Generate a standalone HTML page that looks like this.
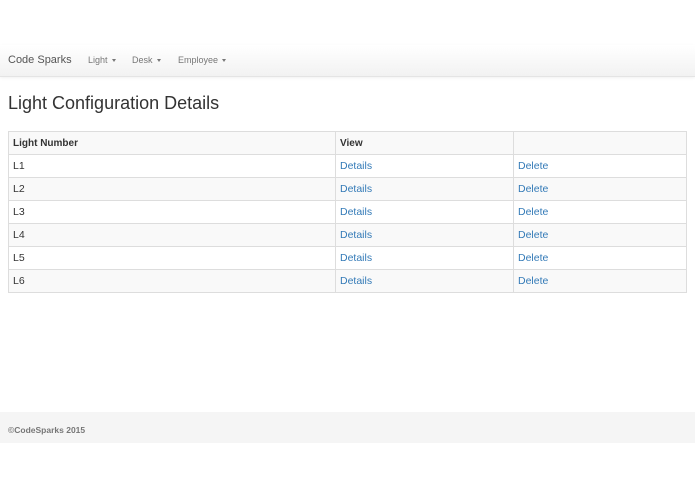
<!DOCTYPE html><html><head><style>
body{margin:0;font-family:"Liberation Sans",sans-serif;background:#fff;width:695px;height:494px;position:relative;overflow:hidden}
.nav{position:absolute;top:45px;left:0;width:695px;height:31px;background:linear-gradient(#fff,#f2f2f2);border-bottom:1px solid #e4e4e4;box-shadow:0 1px 3px rgba(0,0,0,.06)}
.nav span{position:absolute;top:10px;font-size:9px;color:#777}
.nav .b{top:9px;font-size:11px;color:#555;left:8px}
.car{display:inline-block;border-top:3px solid #777;border-left:2.5px solid transparent;border-right:2.5px solid transparent;vertical-align:middle;margin-left:4px}
h1{position:absolute;top:93px;left:8px;margin:0;font-weight:normal;font-size:18px;color:#333}
table{position:absolute;top:131px;left:8px;width:679px;border-collapse:collapse;table-layout:fixed;font-size:10.5px;color:#333}
td{border:1px solid #ddd;height:23px;padding:0 0 0 4px;box-sizing:border-box}
tr:nth-child(odd) td{background:#f9f9f9}
tr.h td{font-weight:bold;background:#f9f9f9;font-size:10px}
a{color:#337ab7}
.f{position:absolute;top:412px;left:0;width:695px;height:31px;background:#f5f5f5}
.f span{position:absolute;left:8px;top:13px;font-size:8.5px;font-weight:bold;color:#777}
</style></head><body>
<div class="nav"><span class="b">Code Sparks</span><span style="left:88px">Light<i class="car"></i></span><span style="left:132px">Desk<i class="car"></i></span><span style="left:178px">Employee<i class="car"></i></span></div>
<h1>Light Configuration Details</h1>
<table>
<colgroup><col style="width:327px"><col style="width:178px"><col></colgroup>
<tr class="h"><td>Light Number</td><td>View</td><td></td></tr>
<tr><td>L1</td><td><a>Details</a></td><td><a>Delete</a></td></tr>
<tr><td>L2</td><td><a>Details</a></td><td><a>Delete</a></td></tr>
<tr><td>L3</td><td><a>Details</a></td><td><a>Delete</a></td></tr>
<tr><td>L4</td><td><a>Details</a></td><td><a>Delete</a></td></tr>
<tr><td>L5</td><td><a>Details</a></td><td><a>Delete</a></td></tr>
<tr><td>L6</td><td><a>Details</a></td><td><a>Delete</a></td></tr>
</table>
<div class="f"><span>©CodeSparks 2015</span></div>
</body></html>
